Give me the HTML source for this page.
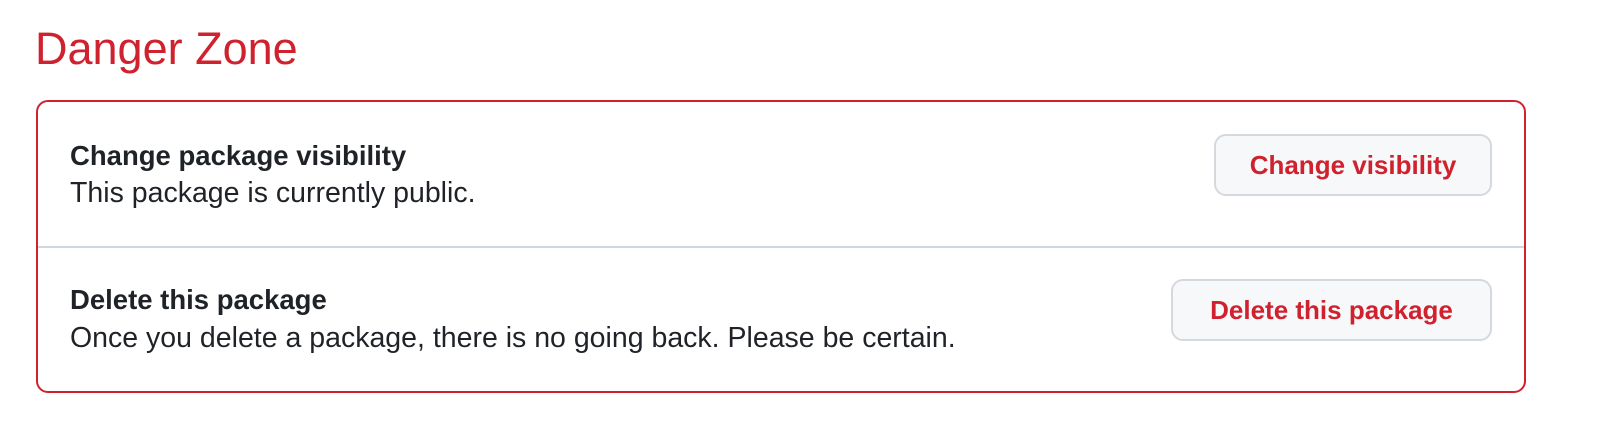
<!DOCTYPE html>
<html><head><meta charset="utf-8"><style>
html,body{margin:0;padding:0;background:#fff;width:1602px;height:436px;overflow:hidden;font-family:"Liberation Sans",Arial,sans-serif;}
h2{position:absolute;left:35px;top:23px;margin:0;font-size:45px;font-weight:normal;color:#cf222e;line-height:52px;}
.box{position:absolute;left:36px;top:100px;width:1486px;height:289px;border:2px solid #cf222e;border-radius:12px;}
.row{position:absolute;left:0;right:0;height:144px;}
.r1{top:0;border-bottom:2px solid #d0d7de;}
.r2{top:146px;height:143px;}
.t{position:absolute;left:32px;font-size:27.5px;line-height:32px;font-weight:bold;color:#1f2328;}
.d{position:absolute;left:32px;font-size:28.5px;line-height:32px;color:#1f2328;}
.btn{position:absolute;right:32px;height:58px;border:2px solid #d5d9dd;border-radius:12px;background:#f6f8fa;color:#cf222e;font-size:26px;font-weight:bold;line-height:58px;text-align:center;box-sizing:content-box;}
</style></head><body>
<h2>Danger Zone</h2>
<div class="box">
<div class="row r1">
<div class="t" style="top:38px">Change package visibility</div>
<div class="d" style="top:75px">This package is currently public.</div>
<div class="btn" style="top:32px;width:274px">Change visibility</div>
</div>
<div class="row r2">
<div class="t" style="top:36px">Delete this package</div>
<div class="d" style="top:74px">Once you delete a package, there is no going back. Please be certain.</div>
<div class="btn" style="top:31px;width:317px">Delete this package</div>
</div>
</div>
</body></html>
